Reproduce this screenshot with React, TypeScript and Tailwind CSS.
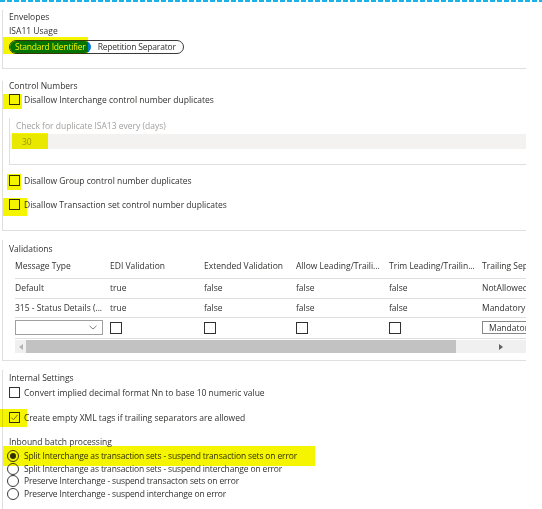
import React from "react";

function CheckBox({ checked = false }: { checked?: boolean }) {
  return (
    <span className="flex h-[11px] w-[11px] shrink-0 items-center justify-center border border-[#323130] bg-white">
      {checked && (
        <svg width="9" height="9" viewBox="0 0 9 9">
          <path d="M1.4 4.6 L3.4 6.7 L7.6 1.9" fill="none" stroke="#707070" strokeWidth="0.9" />
        </svg>
      )}
    </span>
  );
}

function GridCheck() {
  return <span className="block h-[12px] w-[12px] border border-[#323130] bg-white" />;
}

function CheckRow({ label, checked = false, className }: { label: string; checked?: boolean; className: string }) {
  return (
    <div className={className}>
      <CheckBox checked={checked} />
      <span>{label}</span>
    </div>
  );
}

function Radio({ on = false, label }: { on?: boolean; label: string }) {
  return (
    <div className="-ml-[2px] flex items-center gap-[5px] leading-[12.6px] tracking-[-0.15px]">
      <span className="flex h-[12px] w-[12px] shrink-0 items-center justify-center rounded-full border border-[#3b3a39] bg-white">
        {on && <span className="h-[6px] w-[6px] rounded-full bg-[#323130]" />}
      </span>
      <span>{label}</span>
    </div>
  );
}

const columns = "grid grid-cols-[95px_94px_92px_93px_93px_93px] whitespace-nowrap";

export default function App() {
  return (
    <div className="relative h-[509px] w-[542px] overflow-hidden bg-white font-['Open_Sans',sans-serif] text-[8.5px] text-[#323130]">
      <div className="h-[2px] w-full bg-[repeating-linear-gradient(90deg,#19b3ea_0_5px,transparent_5px_7px)]" />

      {/* Envelopes */}
      <section className="ml-[2px] mt-[8px] w-[524px] border-b border-l border-[#e1dfdd] pb-[14px] pl-[6px]">
        <div className="leading-[14px]">Envelopes</div>
        <div className="leading-[14px]">ISA11 Usage</div>
        <div className="mt-[2px] flex h-[14px] w-fit items-stretch rounded-full border border-[#3b3a39] tracking-[-0.2px]">
          <span className="flex items-center rounded-full bg-[#0078d4] px-[5px] pb-[2px] leading-[9px] text-white">
            Standard Identifier
          </span>
          <span className="flex items-center pb-[2px] pl-[7px] pr-[7px] leading-[9px]">Repetition Separator</span>
        </div>
      </section>

      {/* Control numbers */}
      <section className="ml-[2px] mt-[12px] w-[524px] border-b border-l border-[#e1dfdd] pb-[19px] pl-[6px]">
        <div className="leading-[10px]">Control Numbers</div>
        <CheckRow
          className="mt-[2px] flex items-center gap-[4px] leading-[13px]"
          label="Disallow Interchange control number duplicates"
        />
        <div className="mt-[12px] border-b border-l border-[#e1dfdd] pb-[15px] pt-[2px]">
          <div className="ml-[6px] leading-[12px] text-[#a19f9d]">Check for duplicate ISA13 every (days)</div>
          <div className="mt-[2px] h-[15px] bg-[#f3f2f1] pl-[12px] leading-[15px] text-[#a19f9d]">30</div>
        </div>
        <CheckRow
          className="mt-[9px] flex items-center gap-[4px] leading-[13px]"
          label="Disallow Group control number duplicates"
        />
        <CheckRow
          className="mt-[11px] flex items-center gap-[4px] leading-[13px]"
          label="Disallow Transaction set control number duplicates"
        />
      </section>

      {/* Validations */}
      <section className="ml-[2px] mt-[9px] w-[524px] border-b border-l border-[#e1dfdd] pb-[7px] pl-[6px] pt-[3px]">
        <div className="leading-[12px]">Validations</div>
        <div className="ml-[6px] w-[511px] overflow-hidden">
          <div className="w-[560px]">
            <div className={`${columns} border-b border-[#e1dfdd] pb-[6px] pt-[5px] leading-[12px]`}>
              <span>Message Type</span>
              <span>EDI Validation</span>
              <span>Extended Validation</span>
              <span>Allow Leading/Traili...</span>
              <span>Trim Leading/Trailin...</span>
              <span>Trailing Separator</span>
            </div>
            <div className={`${columns} border-b border-[#e1dfdd] pb-[4px] pt-[3px] leading-[12px]`}>
              <span>Default</span>
              <span>true</span>
              <span>false</span>
              <span>false</span>
              <span>false</span>
              <span>NotAllowed</span>
            </div>
            <div className={`${columns} border-b border-[#e1dfdd] pb-[3px] pt-[3px] leading-[12px]`}>
              <span>315 - Status Details (...</span>
              <span>true</span>
              <span>false</span>
              <span>false</span>
              <span>false</span>
              <span>Mandatory</span>
            </div>
            <div className={`${columns} items-center border-b border-[#e1dfdd] pb-[3px] pt-[2px]`}>
              <div className="flex h-[15px] w-[88px] items-center justify-end border border-[#a19f9d] bg-white pr-[5px]">
                <svg width="8" height="5" viewBox="0 0 8 5">
                  <path d="M0.5 0.8 L4 4 L7.5 0.8" fill="none" stroke="#605e5c" strokeWidth="0.8" />
                </svg>
              </div>
              <GridCheck />
              <GridCheck />
              <GridCheck />
              <GridCheck />
              <div className="flex h-[13px] items-center border border-[#8a8886] bg-white pl-[6px] leading-[11px]">
                Mandatory
              </div>
            </div>
          </div>
          {/* horizontal scroller */}
          <div className="mt-[1px] flex h-[13px] items-center bg-[#f0f0f0]">
            <div className="flex w-[11px] shrink-0 items-center justify-center">
              <svg width="4" height="6" viewBox="0 0 4 6">
                <path d="M4 0 L0 3 L4 6 Z" fill="#b4b4b4" />
              </svg>
            </div>
            <div className="h-full w-[430px] bg-[#c2c2c2]" />
            <div className="flex flex-1 items-center justify-end pr-[23px]">
              <svg width="4" height="6" viewBox="0 0 4 6">
                <path d="M0 0 L4 3 L0 6 Z" fill="#606060" />
              </svg>
            </div>
          </div>
        </div>
      </section>

      {/* Internal settings */}
      <section className="ml-[2px] mt-[9px] w-[524px] border-l border-[#e1dfdd] pb-[20px] pl-[6px] pt-[2px]">
        <div className="leading-[12px]">Internal Settings</div>
        <CheckRow
          className="mt-[2px] flex items-center gap-[4px] leading-[13px]"
          label="Convert implied decimal format Nn to base 10 numeric value"
        />
        <CheckRow
          className="mt-[12px] flex items-center gap-[4px] leading-[13px]"
          checked
          label="Create empty XML tags if trailing separators are allowed"
        />
        <div className="mt-[12px] leading-[12px]">Inbound batch processing</div>
        <div className="mt-[2px]">
          <Radio on label="Split Interchange as transaction sets - suspend transaction sets on error" />
          <Radio label="Split Interchange as transaction sets - suspend interchange on error" />
          <Radio label="Preserve Interchange - suspend transacton sets on error" />
          <Radio label="Preserve Interchange - suspend interchange on error" />
        </div>
      </section>

      {/* highlighter marks */}
      <div className="pointer-events-none absolute left-[3px] top-[37px] h-[17px] w-[85px] bg-[#f5f500] mix-blend-multiply" />
      <div className="pointer-events-none absolute left-[3px] top-[94px] h-[15px] w-[19px] bg-[#f5f500] mix-blend-multiply" />
      <div className="pointer-events-none absolute left-[12px] top-[133px] h-[16px] w-[36px] bg-[#f5f500] mix-blend-multiply" />
      <div className="pointer-events-none absolute left-[7px] top-[174px] h-[16px] w-[14px] bg-[#f5f500] mix-blend-multiply" />
      <div className="pointer-events-none absolute left-[3px] top-[198px] h-[18px] w-[24px] bg-[#f5f500] mix-blend-multiply" />
      <div className="pointer-events-none absolute left-0 top-[409px] h-[18px] w-[27px] bg-[#f5f500] mix-blend-multiply" />
      <div className="pointer-events-none absolute left-[3px] top-[446px] h-[20px] w-[312px] bg-[#f5f500] mix-blend-multiply" />
    </div>
  );
}
